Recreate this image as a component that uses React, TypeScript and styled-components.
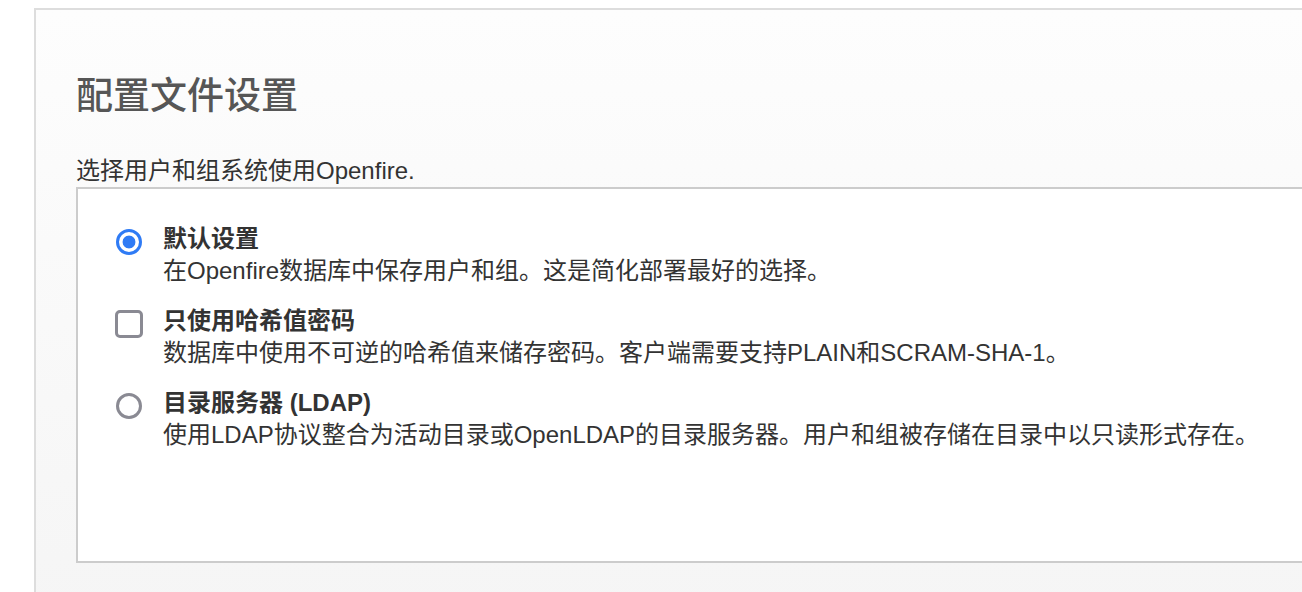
import React from "react";
import styled, { createGlobalStyle } from "styled-components";

const GlobalStyle = createGlobalStyle`
  html, body {
    margin: 0;
    padding: 0;
    background: #ffffff;
    overflow: hidden;
  }
  body {
    font-family: "Liberation Sans", "Noto Sans CJK SC", sans-serif;
    color: #333333;
  }
`;

const Page = styled.div`
  padding: 8px 0 0 34px;
  width: 100vw;
  height: 100vh;
  box-sizing: border-box;
  overflow: hidden;
`;

const Panel = styled.section`
  width: 1400px;
  border: 2px solid #dddddd;
  border-right: none;
  border-bottom: none;
  min-height: 640px;
  padding: 64px 40px 0 40px;
  background: linear-gradient(to bottom, #fdfdfd 0%, #f4f4f4 100%);
`;

const Heading = styled.h1`
  margin: 0;
  font-size: 37px;
  line-height: 46px;
  font-weight: 500;
  color: #565656;
`;

const Intro = styled.p`
  margin: 35px 0 0 0;
  font-size: 24px;
  line-height: 32px;
  color: #333333;
`;

const OptionsBox = styled.div`
  border: 2px solid #cccccc;
  background: #ffffff;
  padding: 34px 0 110px 38px;
  display: flex;
  flex-direction: column;
  gap: 18px;
`;

const Option = styled.label`
  display: grid;
  grid-template-columns: 26px 1fr;
  column-gap: 21px;
  align-items: start;
  cursor: pointer;
`;

const ControlSlot = styled.div`
  height: 32px;
  display: flex;
  align-items: center;
  justify-content: center;
  padding-top: 6px;
  box-sizing: border-box;
`;

const Radio = styled.span<{ $checked?: boolean }>`
  display: block;
  flex: none;
  width: 26px;
  height: 26px;
  box-sizing: border-box;
  border-radius: 50%;
  border: 3.5px solid ${(p) => (p.$checked ? "#2f7bf5" : "#8a8a93")};
  background: ${(p) =>
    p.$checked
      ? "radial-gradient(circle, #2f7bf5 0, #2f7bf5 6px, #ffffff 6.8px)"
      : "#ffffff"};
`;

const Checkbox = styled.span`
  display: block;
  flex: none;
  width: 28px;
  height: 28px;
  box-sizing: border-box;
  border-radius: 5px;
  border: 3.5px solid #8a8a93;
  background: #ffffff;
`;

const OptionText = styled.div`
  display: flex;
  flex-direction: column;
`;

const OptionTitle = styled.span`
  font-size: 24px;
  line-height: 32px;
  font-weight: 700;
  color: #333333;
`;

const OptionDesc = styled.span`
  font-size: 24px;
  line-height: 32px;
  color: #333333;
`;

type Item = {
  kind: "radio" | "checkbox";
  checked?: boolean;
  title: string;
  desc: string;
};

const items: Item[] = [
  {
    kind: "radio",
    checked: true,
    title: "默认设置",
    desc: "在Openfire数据库中保存用户和组。这是简化部署最好的选择。",
  },
  {
    kind: "checkbox",
    title: "只使用哈希值密码",
    desc: "数据库中使用不可逆的哈希值来储存密码。客户端需要支持PLAIN和SCRAM-SHA-1。",
  },
  {
    kind: "radio",
    title: "目录服务器 (LDAP)",
    desc: "使用LDAP协议整合为活动目录或OpenLDAP的目录服务器。用户和组被存储在目录中以只读形式存在。",
  },
];

export default function App() {
  return (
    <>
      <GlobalStyle />
      <Page>
        <Panel>
          <Heading>配置文件设置</Heading>
          <Intro>选择用户和组系统使用Openfire.</Intro>
          <OptionsBox>
            {items.map((it) => (
              <Option key={it.title}>
                <ControlSlot>
                  {it.kind === "radio" ? (
                    <Radio $checked={it.checked} />
                  ) : (
                    <Checkbox />
                  )}
                </ControlSlot>
                <OptionText>
                  <OptionTitle>{it.title}</OptionTitle>
                  <OptionDesc>{it.desc}</OptionDesc>
                </OptionText>
              </Option>
            ))}
          </OptionsBox>
        </Panel>
      </Page>
    </>
  );
}
